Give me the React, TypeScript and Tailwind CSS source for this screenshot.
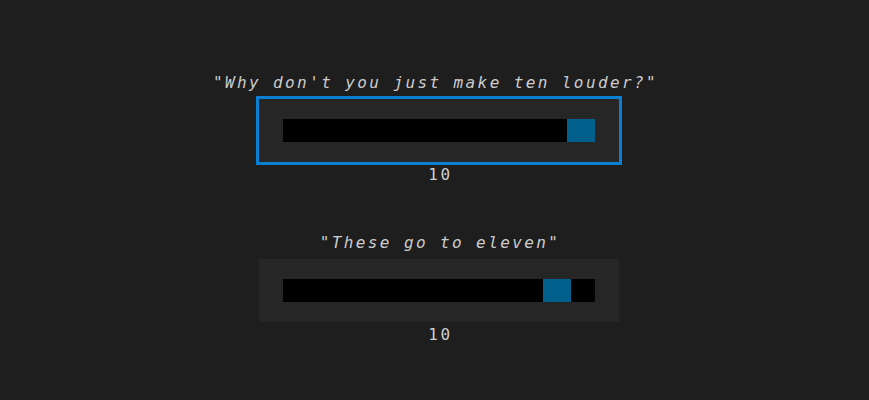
import React from "react";

function Slider({ left, focused }: { left: number; focused?: boolean }) {
  return (
    <div
      className={
        "mt-[4px] flex h-[63px] w-[360px] items-center bg-[#262626] px-[24px] " +
        (focused ? "outline outline-[3px] outline-[#0a7fd4]" : "")
      }
    >
      <div className="relative h-[23px] w-[312px] bg-black">
        <div className="absolute top-0 h-[23px] w-[28px] bg-[#00608b]" style={{ left }} />
      </div>
    </div>
  );
}

function Group({ quote, left, focused, shift }: { quote: string; left: number; focused?: boolean; shift?: boolean }) {
  return (
    <div className="flex flex-col items-center">
      <div
        className={
          "h-[24px] text-[16px] leading-[24px] italic tracking-[2.4px] text-[#cccccc] " + (shift ? "mr-[7px]" : "ml-[2px]")
        }
      >
        {quote}
      </div>
      <Slider left={left} focused={focused} />
      <div className="ml-[3px] h-[24px] pt-[1px] text-[16px] leading-[24px] tracking-[2.6px] text-[#cccccc]">10</div>
    </div>
  );
}

export default function App() {
  return (
    <div
      className="flex h-[400px] w-full flex-col items-center gap-[45px] bg-[#1e1e1e] pl-[9px] pt-[71px]"
      style={{ fontFamily: '"DejaVu Sans Mono", monospace' }}
    >
      <Group quote={"\"Why don't you just make ten louder?\""} left={284} focused shift />
      <Group quote={'"These go to eleven"'} left={260} />
    </div>
  );
}
